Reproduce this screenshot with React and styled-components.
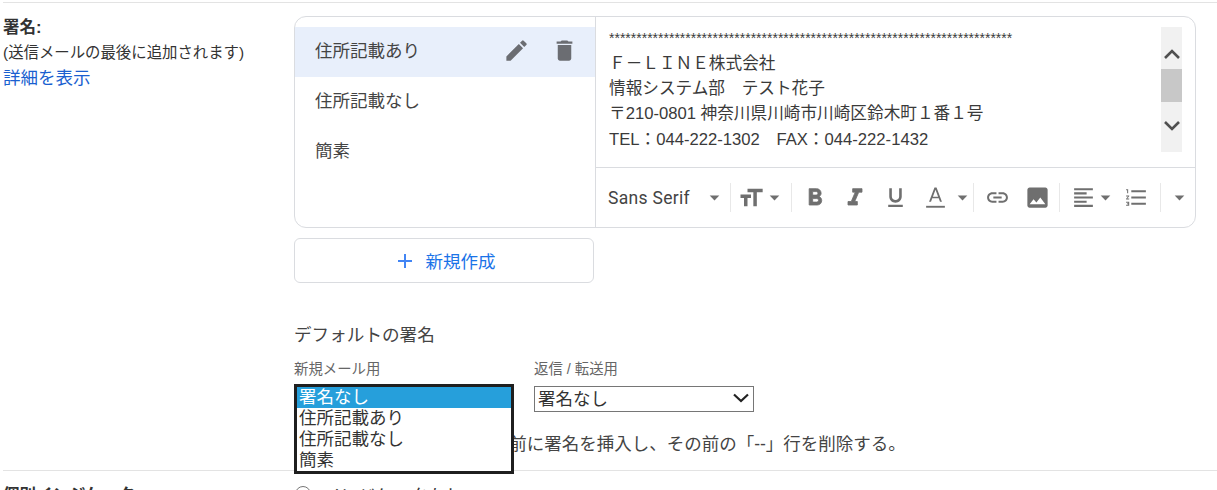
import React from 'react';
import styled, { createGlobalStyle } from 'styled-components';
import {
  MdAdd, MdEdit, MdDelete, MdArrowDropDown,
  MdFormatSize, MdFormatUnderlined,
  MdLink, MdImage, MdFormatAlignLeft, MdFormatListNumbered,
} from 'react-icons/md';

const Global = createGlobalStyle`
  html, body {
    margin: 0;
    height: 490px;
    overflow: hidden;
    background: #fff;
  }
  body {
    font-family: "Liberation Sans", "Noto Sans CJK JP", sans-serif;
    color: #222;
  }
`;

const Page = styled.div`
  height: 488px;
  overflow: hidden;
  padding: 2px 0 0 3px;
`;

const SettingRow = styled.section`
  display: grid;
  grid-template-columns: 291px 903px;
  border-top: 1px solid #e3e3e3;
  padding-top: ${(p) => p.$top}px;
  padding-bottom: ${(p) => p.$bottom || 0}px;
`;

const LabelCol = styled.div`
  padding-left: 0;
`;

const Title = styled.div`
  margin-top: -1px;
  font-size: 16.5px;
  font-weight: bold;
  line-height: 24px;
  color: #333;
`;

const Hint = styled.div`
  margin-top: 2px;
  font-size: 15.4px;
  line-height: 24px;
  color: #333;
`;

const MoreLink = styled.a`
  display: block;
  font-size: 17.5px;
  line-height: 26px;
  color: #1a5fd0;
`;

const Card = styled.div`
  display: flex;
  width: 902px;
  height: 212px;
  box-sizing: border-box;
  border: 1px solid #dadce0;
  border-radius: 12px;
  overflow: hidden;
`;

const SigList = styled.div`
  width: 300px;
  flex: none;
  padding-top: 10px;
  border-right: 1px solid #dadce0;
`;

const SigItem = styled.div`
  display: flex;
  align-items: center;
  height: 50px;
  box-sizing: border-box;
  padding: 0 0 4px 20px;
  font-size: 17.5px;
  color: #444;
  background: ${(p) => (p.$active ? '#e8effb' : 'transparent')};
`;

const SigName = styled.span`
  flex: 1;
  padding-bottom: 2px;
`;

const SigAction = styled.span`
  display: flex;
  justify-content: center;
  width: 48px;
  font-size: 27px;
  color: #6b6d72;
  &:last-child {
    margin-right: 7px;
  }
`;

const Editor = styled.div`
  flex: 1;
  display: flex;
  flex-direction: column;
  min-width: 0;
`;

const EditorBody = styled.div`
  display: flex;
  height: 150px;
  border-bottom: 1px solid #dadce0;
  padding: 0 13px 0 13px;
`;

const SigText = styled.div`
  flex: 1;
  padding-top: 13px;
  font-size: 16.65px;
  line-height: 25.2px;
  color: #3a3a3a;
  white-space: pre;
`;

const Stars = styled.div`
  font-size: 14px;
  line-height: 16px;
  margin-bottom: 5px;
`;

const ScrollBar = styled.div`
  width: 21px;
  margin-top: 10px;
  height: 125px;
  background: #f1f1f1;
  display: flex;
  flex-direction: column;
  align-items: center;
`;

const ScrollArrow = styled.div`
  display: flex;
  align-items: center;
  justify-content: center;
  height: ${(p) => p.$height}px;
  padding: ${(p) => p.$drop || 0}px 0 ${(p) => p.$lift || 0}px;
  box-sizing: border-box;
  flex: none;
`;

const ScrollThumb = styled.div`
  width: 100%;
  height: 33px;
  flex: none;
  background: #c8c8c8;
`;

const Toolbar = styled.div`
  display: flex;
  align-items: center;
  height: 59px;
  padding-left: 12px;
`;

const ToolGroup = styled.div`
  display: flex;
  align-items: center;
  height: 29px;
  width: ${(p) => p.$width}px;
  flex: none;
  box-sizing: border-box;
  padding-left: ${(p) => p.$pad || 0}px;
  border-right: ${(p) => (p.$last ? 'none' : '1px solid #e8e8e8')};
`;

const FontName = styled.span`
  flex: 1;
  font-family: Roboto, sans-serif;
  font-size: 17.5px;
  letter-spacing: 0.3px;
  color: #444;
`;

const ToolBtn = styled.span`
  display: flex;
  align-items: center;
  justify-content: center;
  width: ${(p) => p.$width || 40}px;
  flex: none;
  font-size: ${(p) => p.$size || 25}px;
  color: #6f6f6f;
`;

const Caret = styled(MdArrowDropDown)`
  font-size: 23px;
  color: #6f6f6f;
  flex: none;
  margin-left: ${(p) => p.$gap || 0}px;
  margin-right: ${(p) => p.$after || 0}px;
`;

const NewButton = styled.button`
  display: flex;
  align-items: center;
  justify-content: center;
  gap: 9px;
  width: 300px;
  height: 45px;
  margin-top: 10px;
  background: #fff;
  border: 1px solid #dadce0;
  border-radius: 6px;
  color: #1a73e8;
  font: inherit;
  font-size: 17.5px;
  padding: 0;
  svg {
    font-size: 24px;
    color: #4285f4;
  }
`;

const DefaultHeading = styled.div`
  margin-top: 41px;
  font-size: 17.6px;
  line-height: 22px;
  color: #444;
`;

const Selectors = styled.div`
  display: flex;
  gap: 20px;
  margin-top: 14px;
`;

const SelectField = styled.div`
  position: relative;
  width: 220px;
`;

const FieldLabel = styled.div`
  font-size: 14.4px;
  line-height: 18px;
  margin-bottom: 8px;
  color: #666;
`;

const SelectBox = styled.div`
  position: relative;
  width: 220px;
  height: 26px;
`;

const NativeSelect = styled.select`
  display: block;
  width: 100%;
  height: 100%;
  padding: 0 0 0 3px;
  appearance: none;
  font-family: inherit;
  font-size: 17.5px;
  color: #333;
  background: #fff;
  border: 1px solid #767676;
  border-radius: 0;
`;

const Chevron = styled.svg`
  position: absolute;
  right: 5px;
  top: 7px;
  width: 16px;
  height: 10px;
  pointer-events: none;
`;

const ListBox = styled.ul`
  position: absolute;
  left: 0;
  top: 24px;
  z-index: 2;
  width: 220px;
  margin: 0;
  padding: 0;
  box-sizing: border-box;
  list-style: none;
  background: #fff;
  border: 3px solid #1f1f1f;
`;

const ListOption = styled.li`
  height: 21px;
  line-height: 21px;
  padding-left: 2px;
  font-size: 17.5px;
  color: ${(p) => (p.$selected ? '#fff' : '#333')};
  background: ${(p) => (p.$selected ? '#269fdb' : '#fff')};
`;

const ReplyOption = styled.label`
  display: flex;
  align-items: center;
  gap: 7px;
  margin-top: 18px;
  height: 24px;
  font-size: 17.5px;
  white-space: nowrap;
  color: #444;
`;

const Tick = styled.input`
  width: 16px;
  height: 16px;
  margin: 0;
`;

const RadioRow = styled.label`
  display: flex;
  align-items: center;
  gap: 12px;
  height: 20px;
  font-size: 17.5px;
  color: #333;
`;

const Radio = styled.input`
  width: 16px;
  height: 16px;
  margin: 0 0 0 1px;
`;

const sigs = ['住所記載あり', '住所記載なし', '簡素'];
const options = ['署名なし', '住所記載あり', '住所記載なし', '簡素'];

// 全角文字はエスケープで持つ
const sigLines = [
  '\uFF26\uFF0D\uFF2C\uFF29\uFF2E\uFF25株式会社',
  '情報システム部\u3000テスト花子',
  '〒210-0801 神奈川県川崎市川崎区鈴木町\uFF11番\uFF11号',
  'TEL\uFF1A044-222-1302\u3000FAX\uFF1A044-222-1432',
];

const BoldIcon = () => (
  <svg width="28" height="28" viewBox="0 0 24 24" fill="currentColor" stroke="currentColor" strokeWidth="0.7">
    <path d="M15.6 10.79c.97-.67 1.65-1.77 1.65-2.79 0-2.26-1.75-4-4-4H7v14h7.04c2.09 0 3.71-1.7 3.71-3.79 0-1.52-.86-2.82-2.15-3.42zM10 6.5h3c.83 0 1.5.67 1.5 1.5s-.67 1.5-1.5 1.5h-3v-3zm3.5 9H10v-3h3.5c.83 0 1.5.67 1.5 1.5s-.67 1.5-1.5 1.5z" />
  </svg>
);

const ItalicIcon = () => (
  <svg width="28" height="28" viewBox="0 0 24 24" fill="currentColor" stroke="currentColor" strokeWidth="0.7">
    <path d="M10 4v3h2.21l-3.42 8H6v3h8v-3h-2.21l3.42-8H18V4z" />
  </svg>
);

const TextColorIcon = () => (
  <svg width="25" height="25" viewBox="0 0 24 24" fill="currentColor">
    <path d="M11 2.5L5.8 16h1.9l1.2-3.2h6.2l1.2 3.2h1.9L13 2.5h-2zm-1.5 8.7L12 4.6l2.5 6.6H9.5z" />
    <rect x="3" y="20" width="18" height="1.8" />
  </svg>
);

const ChevronUp = () => (
  <svg width="18" height="12" viewBox="0 0 18 12">
    <path d="M2 10 L9 3 L16 10" fill="none" stroke="#505050" strokeWidth="2.6" />
  </svg>
);

const ChevronDown = () => (
  <svg width="18" height="12" viewBox="0 0 18 12">
    <path d="M2 2 L9 9 L16 2" fill="none" stroke="#505050" strokeWidth="2.6" />
  </svg>
);

export default function App() {
  return (
    <Page>
      <Global />
      <SettingRow $top={13} $bottom={16}>
        <LabelCol>
          <Title>署名:</Title>
          <Hint>(送信メールの最後に追加されます)</Hint>
          <MoreLink>詳細を表示</MoreLink>
        </LabelCol>
        <div>
          <Card>
            <SigList>
              {sigs.map((name, i) => (
                <SigItem key={name} $active={i === 0}>
                  <SigName>{name}</SigName>
                  {i === 0 && <SigAction><MdEdit /></SigAction>}
                  {i === 0 && <SigAction><MdDelete /></SigAction>}
                </SigItem>
              ))}
            </SigList>
            <Editor>
              <EditorBody>
                <SigText>
                  <Stars>{'*'.repeat(74)}</Stars>
                  {sigLines.map((line) => <div key={line}>{line}</div>)}
                </SigText>
                <ScrollBar>
                  <ScrollArrow $height={42} $drop={12}><ChevronUp /></ScrollArrow>
                  <ScrollThumb />
                  <ScrollArrow $height={50} $lift={2}><ChevronDown /></ScrollArrow>
                </ScrollBar>
              </EditorBody>
              <Toolbar>
                <ToolGroup $width={123}>
                  <FontName>Sans Serif</FontName>
                  <Caret $after={4} />
                </ToolGroup>
                <ToolGroup $width={61} $pad={6}>
                  <ToolBtn $width={28} $size={30}><MdFormatSize /></ToolBtn>
                  <Caret $gap={-2} />
                </ToolGroup>
                <ToolGroup $width={182} $pad={3}>
                  <ToolBtn><BoldIcon /></ToolBtn>
                  <ToolBtn><ItalicIcon /></ToolBtn>
                  <ToolBtn><MdFormatUnderlined /></ToolBtn>
                  <ToolBtn><TextColorIcon /></ToolBtn>
                  <Caret $gap={-4} />
                </ToolGroup>
                <ToolGroup $width={86} $pad={3}>
                  <ToolBtn><MdLink /></ToolBtn>
                  <ToolBtn $size={27}><MdImage /></ToolBtn>
                </ToolGroup>
                <ToolGroup $width={101} $pad={8}>
                  <ToolBtn $width={30}><MdFormatAlignLeft /></ToolBtn>
                  <Caret $gap={-4} />
                  <ToolBtn $width={38}><MdFormatListNumbered /></ToolBtn>
                </ToolGroup>
                <ToolGroup $width={36} $pad={7} $last>
                  <Caret />
                </ToolGroup>
              </Toolbar>
            </Editor>
          </Card>
          <NewButton><MdAdd />新規作成</NewButton>
          <DefaultHeading>デフォルトの署名</DefaultHeading>
          <Selectors>
            <SelectField>
              <FieldLabel>新規メール用</FieldLabel>
              <SelectBox>
                <NativeSelect defaultValue="署名なし" aria-hidden="true" tabIndex={-1}>
                  <option>署名なし</option>
                </NativeSelect>
              </SelectBox>
              <ListBox>
                {options.map((o, i) => (
                  <ListOption key={o} $selected={i === 0}>{o}</ListOption>
                ))}
              </ListBox>
            </SelectField>
            <SelectField>
              <FieldLabel>返信 / 転送用</FieldLabel>
              <SelectBox>
                <NativeSelect defaultValue="署名なし">
                  {options.map((o) => <option key={o}>{o}</option>)}
                </NativeSelect>
                <Chevron viewBox="0 0 16 10">
                  <path d="M1 1.5 L8 8 L15 1.5" fill="none" stroke="#222" strokeWidth="2.2" />
                </Chevron>
              </SelectBox>
            </SelectField>
          </Selectors>
          <ReplyOption>
            <Tick type="checkbox" />
            返信で元のメッセージの前に署名を挿入し、その前の「--」行を削除する。
          </ReplyOption>
        </div>
      </SettingRow>
      <SettingRow $top={13}>
        <LabelCol>
          <Title>個別インジケータ:</Title>
        </LabelCol>
        <RadioRow>
          <Radio type="radio" name="indicator" />
          インジケータなし
        </RadioRow>
      </SettingRow>
    </Page>
  );
}
